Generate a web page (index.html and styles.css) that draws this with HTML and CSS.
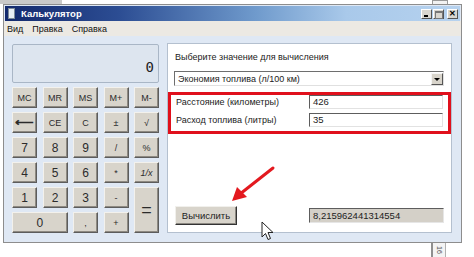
FILE: index.html
```html
<!DOCTYPE html>
<html>
<head>
    <title>Калькулятор</title>
    <link rel="stylesheet" href="styles.css">
</head>
<body>
    <div class="stage">
        <div class="behind-top"></div>
        <div class="behind-bottom">16</div>

        <div class="window">
            <div class="titlebar">
                <span class="app-icon"></span>
                <span class="title">Калькулятор</span>
                <div class="ctrls">
                    <span class="ctrl ctrl-min"></span>
                    <span class="ctrl ctrl-max"></span>
                    <span class="ctrl ctrl-close">✕</span>
                </div>
            </div>
            <div class="menubar">
                <span>Вид</span>
                <span>Правка</span>
                <span>Справка</span>
            </div>

            <div class="body">
                <div class="calc">
                    <div class="display">0</div>
                    <div class="keys">
                        <button class="key small">MC</button>
                        <button class="key small">MR</button>
                        <button class="key small">MS</button>
                        <button class="key small">M+</button>
                        <button class="key small">M-</button>

                        <button class="key back">⟵</button>
                        <button class="key small">CE</button>
                        <button class="key small">C</button>
                        <button class="key small">±</button>
                        <button class="key small">√</button>

                        <button class="key">7</button>
                        <button class="key">8</button>
                        <button class="key">9</button>
                        <button class="key small">/</button>
                        <button class="key small">%</button>

                        <button class="key">4</button>
                        <button class="key">5</button>
                        <button class="key">6</button>
                        <button class="key small">*</button>
                        <button class="key small"><i>1/x</i></button>

                        <button class="key">1</button>
                        <button class="key">2</button>
                        <button class="key">3</button>
                        <button class="key small">-</button>
                        <button class="key equals">=</button>

                        <button class="key zero">0</button>
                        <button class="key small">,</button>
                        <button class="key small">+</button>
                    </div>
                </div>

                <div class="panel">
                    <div class="caption">Выберите значение для вычисления</div>
                    <div class="select">
                        <span>Экономия топлива (л/100 км)</span>
                        <span class="select-arrow"></span>
                    </div>
                    <div class="highlight">
                        <div class="field-row">
                            <label>Расстояние (километры)</label>
                            <div class="field">426</div>
                        </div>
                        <div class="field-row">
                            <label>Расход топлива (литры)</label>
                            <div class="field">35</div>
                        </div>
                    </div>
                    <div class="spacer"></div>
                    <div class="action-row">
                        <button class="calc-btn">Вычислить</button>
                        <div class="result">8,215962441314554</div>
                    </div>
                </div>
            </div>
        </div>

        <svg class="red-arrow" width="50" height="45" viewBox="0 0 50 45">
            <line x1="45" y1="4" x2="12" y2="30" stroke="#e3191f" stroke-width="3" stroke-linecap="round"/>
            <polygon points="4,37 9,23 19,33" fill="#e3191f"/>
        </svg>

        <svg class="cursor" width="13" height="20" viewBox="0 0 13 20">
            <path d="M1,1 L1,16 L4.5,12.5 L7,18.5 L9.5,17.5 L7,11.5 L12,11.5 Z" fill="#fff" stroke="#222" stroke-width="1"/>
        </svg>
    </div>
</body>
</html>
```

FILE: styles.css
```css
body {
    margin: 0;
    background: #fff;
    font-family: "Liberation Sans", Arial, sans-serif;
}
.stage {
    position: relative;
    width: 474px;
    height: 257px;
    overflow: hidden;
    background: linear-gradient(to right, #c9c9c9 0, #c9c9c9 62px, #fff 62px);
    background-size: 100% 4px;
    background-repeat: no-repeat;
    padding-top: 4px;
    box-sizing: border-box;
}
.behind-top {
    position: absolute;
    left: 432px;
    top: 0;
    width: 14px;
    height: 8px;
    border: 1px solid #9a9a9a;
    background: #f2f2f2;
}
.behind-bottom {
    position: absolute;
    left: 431px;
    top: 243px;
    width: 15px;
    height: 14px;
    box-sizing: border-box;
    border-left: 2px solid #8f8f8f;
    border-right: 1px solid #b0b0b0;
    background: #f4f4f4;
    font-size: 7px;
    color: #555;
    writing-mode: vertical-rl;
    text-align: center;
    line-height: 12px;
}

/* window */
.window {
    position: relative;
    margin-left: 3px;
    width: 457px;
    border: 1px solid #8d8d8d;
    background: #dfe8f4;
}
.titlebar {
    display: flex;
    align-items: center;
    height: 15px;
    margin: 1px 1px 0 1px;
    padding-left: 3px;
    background: linear-gradient(to right, #13296d 0%, #2c4d93 25%, #6f9acc 55%, #a9c9ea 75%, #b6d2ef 100%);
}
.app-icon {
    width: 7px;
    height: 11px;
    background: #e8eef4;
    border: 1px solid #7c8a99;
    box-sizing: border-box;
    margin-right: 6px;
}
.title {
    color: #fff;
    font-weight: bold;
    font-size: 9.5px;
    flex: 1;
}
.ctrls {
    display: flex;
    gap: 1px;
    margin-right: 2px;
}
.ctrl {
    width: 11px;
    height: 10px;
    background: #d9d6cf;
    border: 1px solid;
    border-color: #fff #555 #555 #fff;
    box-sizing: border-box;
    position: relative;
    font-size: 8px;
    font-weight: bold;
    line-height: 8px;
    text-align: center;
    color: #000;
}
.ctrl-close {
    margin-left: 2px;
}
.ctrl-min::after {
    content: "";
    position: absolute;
    left: 2px;
    bottom: 1px;
    width: 4px;
    height: 2px;
    background: #000;
}
.ctrl-max::after {
    content: "";
    position: absolute;
    left: 1px;
    top: 1px;
    width: 6px;
    height: 5px;
    border: 1px solid #777;
    border-top-width: 2px;
}
.menubar {
    display: flex;
    gap: 9px;
    height: 15px;
    align-items: center;
    padding-left: 3px;
    background: #ece9e3;
    font-size: 9px;
    color: #111;
}
.body {
    display: flex;
    gap: 8px;
    padding: 7px 9px 9px 8px;
}

/* calculator */
.calc {
    width: 147px;
}
.display {
    height: 39px;
    border: 1px solid #a9b6c6;
    border-radius: 2px;
    background: #dde5ef;
    box-sizing: border-box;
    text-align: right;
    padding: 14px 4px 0 0;
    font-family: "DejaVu Sans Mono", monospace;
    font-size: 14px;
    color: #222;
    margin-top: 1px;
}
.keys {
    display: grid;
    grid-template-columns: repeat(5, 25px);
    grid-auto-rows: 21px;
    column-gap: 5.5px;
    row-gap: 4px;
    margin-top: 4px;
}
.key {
    margin: 0;
    padding: 0;
    border: 1px solid;
    border-color: #f3f1ec #5c5c5c #5c5c5c #f3f1ec;
    box-shadow: inset -1px -1px 0 #8e8a82;
    background: #d8d4cb;
    font-family: "Liberation Sans", Arial, sans-serif;
    font-size: 12px;
    color: #2b2b2b;
}
.key.small {
    font-size: 9px;
}
.key.back {
    font-size: 13px;
    font-weight: bold;
}
.key.equals {
    grid-row: span 2;
    font-size: 18px;
}
.key.zero {
    grid-column: span 2;
}

/* right panel */
.panel {
    width: 285px;
    height: 190px;
    box-sizing: border-box;
    background: #fff;
    border: 1px solid #b4c0cf;
    display: flex;
    flex-direction: column;
    font-size: 9px;
    color: #222;
}
.caption {
    padding: 8px 0 0 7px;
    height: 18px;
}
.select {
    display: flex;
    align-items: center;
    justify-content: space-between;
    margin: 1px 7px 0 6px;
    height: 15px;
    box-sizing: border-box;
    border: 1px solid;
    border-color: #6e6e6e #e0e0e0 #e0e0e0 #6e6e6e;
    padding-left: 3px;
    font-size: 9px;
}
.select-arrow {
    width: 12px;
    height: 12px;
    background: #d8d4cb;
    border: 1px solid;
    border-color: #f5f5f5 #555 #555 #f5f5f5;
    box-sizing: border-box;
    position: relative;
}
.select-arrow::after {
    content: "";
    position: absolute;
    left: 2px;
    top: 4px;
    border-left: 3px solid transparent;
    border-right: 3px solid transparent;
    border-top: 3px solid #000;
}
.highlight {
    margin: 6px 0 0 0;
    border: 3px solid #e0101c;
    height: 42px;
    box-sizing: border-box;
    display: flex;
    flex-direction: column;
    gap: 4px;
    padding-top: 0;
}
.field-row {
    display: flex;
    align-items: center;
    justify-content: space-between;
    padding: 0 5px 0 5px;
    font-size: 9px;
}
.field {
    width: 134px;
    height: 14px;
    box-sizing: border-box;
    border: 1px solid;
    border-color: #5d5d5d #e2e2e2 #e2e2e2 #5d5d5d;
    padding-left: 3px;
    line-height: 12px;
    font-size: 9.5px;
}
.spacer {
    flex: 1;
}
.action-row {
    display: flex;
    align-items: center;
    justify-content: space-between;
    padding: 0 7px 7px 7px;
}
.calc-btn {
    width: 62px;
    height: 19px;
    padding: 0;
    margin: 0;
    border: 1px solid;
    border-color: #f1f0ec #333 #333 #f1f0ec;
    box-shadow: inset -1px -1px 0 #8c8982;
    background: #d8d4cb;
    font-family: "Liberation Sans", Arial, sans-serif;
    font-size: 9.5px;
    color: #222;
}
.result {
    width: 135px;
    height: 15px;
    box-sizing: border-box;
    background: #d4d0c8;
    border: 1px solid;
    border-color: #5d5d5d #e6e6e6 #e6e6e6 #5d5d5d;
    padding-left: 3px;
    line-height: 13px;
    font-size: 9.5px;
}

/* annotations */
.red-arrow {
    position: absolute;
    left: 228px;
    top: 164px;
}
.cursor {
    position: absolute;
    left: 261px;
    top: 221px;
}
```
